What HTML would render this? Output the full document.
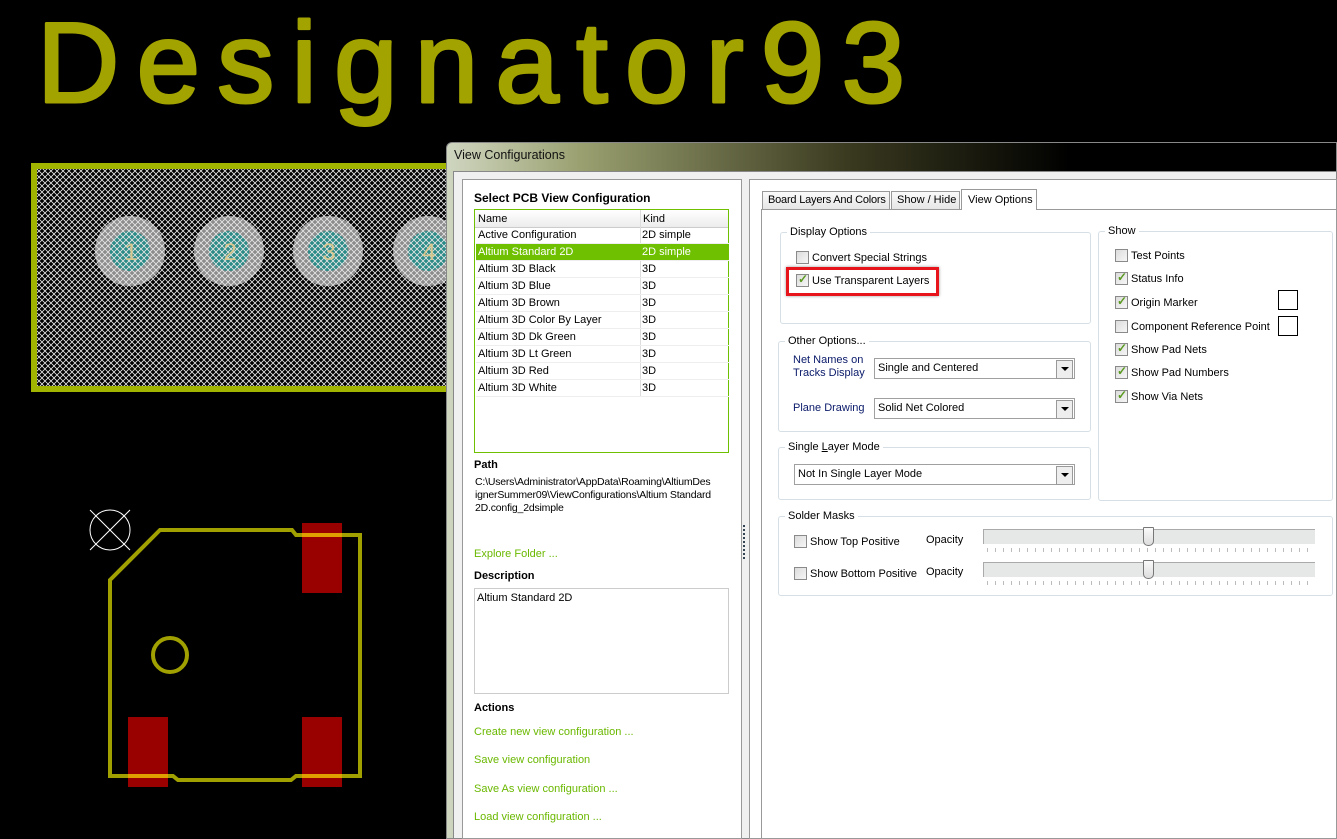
<!DOCTYPE html>
<html><head><meta charset="utf-8"><style>
*{box-sizing:border-box;margin:0;padding:0}
body{width:1337px;height:839px;background:#000;position:relative;overflow:hidden;font-family:"Liberation Sans",sans-serif;font-size:11px;color:#000}
.a{position:absolute;white-space:nowrap}
.t{position:absolute;white-space:nowrap;line-height:14px}
.g{color:#6ab800}
.cb{position:absolute;width:13px;height:13px;border:1px solid #8a8a8a;background:linear-gradient(135deg,#dcdcdc,#f6f6f6)}
.cb.on::after{content:"✓";position:absolute;left:1px;top:-3px;font-size:12px;font-weight:bold;color:#5a9a20}
.grp{position:absolute;border:1px solid #d5dfe5;border-radius:3px}
.grp>span{position:absolute;top:-8px;left:6px;background:#fff;padding:0 3px;line-height:14px}
.combo{position:absolute;height:21px;border:1px solid #a0a0a0;background:#fff;padding-left:3px;line-height:19px}
.combo::after{content:"";position:absolute;right:1px;top:1px;width:15px;height:17px;border:1px solid #999;background:#eee}
.combo i{position:absolute;right:5px;top:8px;width:0;height:0;border-left:4px solid transparent;border-right:4px solid transparent;border-top:4px solid #000;z-index:2}
.row{position:absolute;left:1px;width:253px;height:17px;border-bottom:1px solid #eee;line-height:16px}
.row span{position:absolute;left:2px}.row b{position:absolute;left:166px;font-weight:normal}
</style></head><body>
<svg class="a" style="left:0;top:0" width="1337" height="839">
<defs><pattern id="h" width="6" height="6" patternUnits="userSpaceOnUse"><path d="M0 0L6 6M6 0L0 6" stroke="#e8e8e8" stroke-width="0.8"/></pattern></defs>
<text x="37" y="102" font-family="Liberation Sans" font-size="114" fill="#a3a300" stroke="#a3a300" stroke-width="3" stroke-linejoin="round" textLength="868" lengthAdjust="spacing">Designator93</text>
<rect x="31" y="163" width="430" height="229" fill="#000"/>
<g fill="#8c8c8c"><circle cx="130" cy="251" r="35"/><circle cx="229" cy="251" r="35"/><circle cx="328" cy="251" r="35"/><circle cx="428" cy="251" r="35"/></g>
<g fill="#2a8a86"><circle cx="130" cy="251" r="20"/><circle cx="229" cy="251" r="20"/><circle cx="328" cy="251" r="20"/><circle cx="428" cy="251" r="20"/></g>
<rect x="31" y="163" width="430" height="229" fill="url(#h)"/>
<g font-size="24" fill="#d8c890" font-family="Liberation Sans" text-anchor="middle"><text x="131" y="260">1</text><text x="230" y="260">2</text><text x="329" y="260">3</text><text x="429" y="260">4</text></g>
<rect x="34" y="166" width="424" height="223" fill="none" stroke="#a0b400" stroke-width="6"/>
<g fill="#990000"><rect x="302" y="523" width="40" height="70"/><rect x="128" y="717" width="40" height="70"/><rect x="302" y="717" width="40" height="70"/></g>
<path d="M110 580L160 530L292 530L296 535L360 535L360 776L296 776L291 780L178 780L173 776L110 776Z" fill="none" stroke="#a0a000" stroke-width="4"/>
<g stroke="#e0a000" stroke-width="4"><path d="M302 535H342M302 776H342M128 776H168"/></g>
<circle cx="170" cy="655" r="17" fill="none" stroke="#a0a000" stroke-width="4"/>
<circle cx="110" cy="530" r="20" fill="none" stroke="#fff"/><path d="M90 510L130 550M130 510L90 550" stroke="#fff"/>
</svg>

<div class="a" style="left:446px;top:142px;width:891px;height:697px;background:linear-gradient(90deg,#cfd6c0 0,#9aa070 15%,#3a3a20 45%,#000 70%,#000 100%);border-radius:6px 0 0 0;border:1px solid #888"></div>
<div class="t" style="left:454px;top:148px;font-size:12.5px;color:#111">View Configurations</div>
<div class="a" style="left:453px;top:171px;width:884px;height:668px;background:#f0f0f0;border:1px solid #888"></div>
<div class="a" style="left:462px;top:179px;width:280px;height:660px;background:#fff;border:1px solid #999"></div>
<div class="t" style="left:474px;top:191px;font-weight:bold;font-size:12px">Select PCB View Configuration</div>
<div class="a" style="left:474px;top:209px;width:255px;height:244px;border:1px solid #6ec000;background:#fff">
<div class="a" style="left:0;top:0;width:253px;height:18px;background:linear-gradient(#fff,#ececec);border-bottom:1px solid #ccc"></div>
<div class="t" style="left:3px;top:2px">Name</div><div class="t" style="left:168px;top:2px">Kind</div>
<div class="a" style="left:165px;top:0;width:1px;height:187px;background:#ddd"></div>
<div class="row" style="top:17px"><span>Active Configuration</span><b>2D simple</b></div>
<div class="row" style="top:34px;background:#6ec000;color:#fff"><span>Altium Standard 2D</span><b>2D simple</b></div>
<div class="row" style="top:51px"><span>Altium 3D Black</span><b>3D</b></div>
<div class="row" style="top:68px"><span>Altium 3D Blue</span><b>3D</b></div>
<div class="row" style="top:85px"><span>Altium 3D Brown</span><b>3D</b></div>
<div class="row" style="top:102px"><span>Altium 3D Color By Layer</span><b>3D</b></div>
<div class="row" style="top:119px"><span>Altium 3D Dk Green</span><b>3D</b></div>
<div class="row" style="top:136px"><span>Altium 3D Lt Green</span><b>3D</b></div>
<div class="row" style="top:153px"><span>Altium 3D Red</span><b>3D</b></div>
<div class="row" style="top:170px"><span>Altium 3D White</span><b>3D</b></div>
</div>
<div class="t" style="left:474px;top:458px;font-weight:bold">Path</div>
<div class="a" style="left:475px;top:476px;width:255px;line-height:13px;font-size:10.5px;letter-spacing:-0.2px">C:\Users\Administrator\AppData\Roaming\AltiumDes<br>ignerSummer09\ViewConfigurations\Altium Standard<br>2D.config_2dsimple</div>
<div class="t g" style="left:474px;top:547px">Explore Folder ...</div>
<div class="t" style="left:474px;top:569px;font-weight:bold">Description</div>
<div class="a" style="left:474px;top:588px;width:255px;height:106px;border:1px solid #ccc"></div>
<div class="t" style="left:477px;top:591px">Altium Standard 2D</div>
<div class="t" style="left:474px;top:701px;font-weight:bold">Actions</div>
<div class="t g" style="left:474px;top:725px">Create new view configuration ...</div>
<div class="t g" style="left:474px;top:753px">Save view configuration</div>
<div class="t g" style="left:474px;top:782px">Save As view configuration ...</div>
<div class="t g" style="left:474px;top:810px">Load view configuration ...</div>
<div class="a" style="left:743px;top:525px;width:2px;height:34px;border-left:2px dotted #345"></div>
<div class="a" style="left:749px;top:179px;width:588px;height:660px;background:#fff;border:1px solid #999"></div>
<div class="a" style="left:761px;top:209px;width:576px;height:630px;border:1px solid #999;border-right:none"></div>
<div class="a" style="left:762px;top:191px;width:128px;height:19px;border:1px solid #999;background:linear-gradient(#fafafa,#e6e6e6);padding-left:5px;line-height:17px;letter-spacing:-0.2px">Board Layers And Colors</div>
<div class="a" style="left:891px;top:191px;width:69px;height:19px;border:1px solid #999;background:linear-gradient(#fafafa,#e6e6e6);padding-left:5px;line-height:17px">Show / Hide</div>
<div class="a" style="left:961px;top:189px;width:76px;height:21px;border:1px solid #999;border-bottom:none;background:#fff;padding-left:6px;line-height:20px">View Options</div>

<div class="grp" style="left:780px;top:232px;width:311px;height:92px"><span>Display Options</span></div>
<div class="cb" style="left:796px;top:251px"></div><div class="t" style="left:812px;top:251px">Convert Special Strings</div>
<div class="cb on" style="left:796px;top:274px"></div><div class="t" style="left:812px;top:274px">Use Transparent Layers</div>
<div class="a" style="left:786px;top:267px;width:153px;height:29px;border:3px solid #e8141c;box-shadow:0 0 3px rgba(0,0,0,.4)"></div>

<div class="grp" style="left:778px;top:341px;width:313px;height:91px"><span>Other Options...</span></div>
<div class="a" style="left:793px;top:354px;line-height:13px;color:#0a1a6a">Net Names on<br>Tracks Display</div>
<div class="combo" style="left:874px;top:358px;width:201px">Single and Centered<i></i></div>
<div class="t" style="left:793px;top:401px;color:#0a1a6a">Plane Drawing</div>
<div class="combo" style="left:874px;top:398px;width:201px">Solid Net Colored<i></i></div>

<div class="grp" style="left:778px;top:447px;width:313px;height:53px"><span>Single <u>L</u>ayer Mode</span></div>
<div class="combo" style="left:794px;top:464px;width:281px">Not In Single Layer Mode<i></i></div>

<div class="grp" style="left:1098px;top:231px;width:235px;height:270px"><span>Show</span></div>
<div class="cb" style="left:1115px;top:249px"></div><div class="t" style="left:1131px;top:249px">Test Points</div>
<div class="cb on" style="left:1115px;top:272px"></div><div class="t" style="left:1131px;top:272px">Status Info</div>
<div class="cb on" style="left:1115px;top:296px"></div><div class="t" style="left:1131px;top:296px">Origin Marker</div>
<div class="cb" style="left:1115px;top:320px"></div><div class="t" style="left:1131px;top:320px">Component Reference Point</div>
<div class="cb on" style="left:1115px;top:343px"></div><div class="t" style="left:1131px;top:343px">Show Pad Nets</div>
<div class="cb on" style="left:1115px;top:366px"></div><div class="t" style="left:1131px;top:366px">Show Pad Numbers</div>
<div class="cb on" style="left:1115px;top:390px"></div><div class="t" style="left:1131px;top:390px">Show Via Nets</div>
<div class="a" style="left:1278px;top:290px;width:20px;height:20px;border:1px solid #000"></div>
<div class="a" style="left:1278px;top:316px;width:20px;height:20px;border:1px solid #000"></div>

<div class="grp" style="left:778px;top:516px;width:555px;height:80px"><span>Solder Masks</span></div>
<div class="cb" style="left:794px;top:535px"></div><div class="t" style="left:810px;top:535px">Show Top Positive</div>
<div class="cb" style="left:794px;top:567px"></div><div class="t" style="left:810px;top:567px">Show Bottom Positive</div>
<div class="t" style="left:926px;top:533px">Opacity</div>
<div class="t" style="left:926px;top:565px">Opacity</div>
<div class="a" style="left:983px;top:529px;width:332px;height:15px;background:#e6e8e8;border-top:1px solid #aaa;border-left:1px solid #aaa"></div>
<div class="a" style="left:983px;top:562px;width:332px;height:15px;background:#e6e8e8;border-top:1px solid #aaa;border-left:1px solid #aaa"></div>
<div class="a" style="left:987px;top:548px;width:328px;height:4px;background:repeating-linear-gradient(90deg,#bbb 0 1px,transparent 1px 8px)"></div>
<div class="a" style="left:987px;top:581px;width:328px;height:4px;background:repeating-linear-gradient(90deg,#bbb 0 1px,transparent 1px 8px)"></div>
<div class="a" style="left:1143px;top:527px;width:11px;height:19px;background:linear-gradient(#fafafa,#ddd);border:1px solid #777;border-radius:1px 1px 5px 5px"></div>
<div class="a" style="left:1143px;top:560px;width:11px;height:19px;background:linear-gradient(#fafafa,#ddd);border:1px solid #777;border-radius:1px 1px 5px 5px"></div>
</body></html>
